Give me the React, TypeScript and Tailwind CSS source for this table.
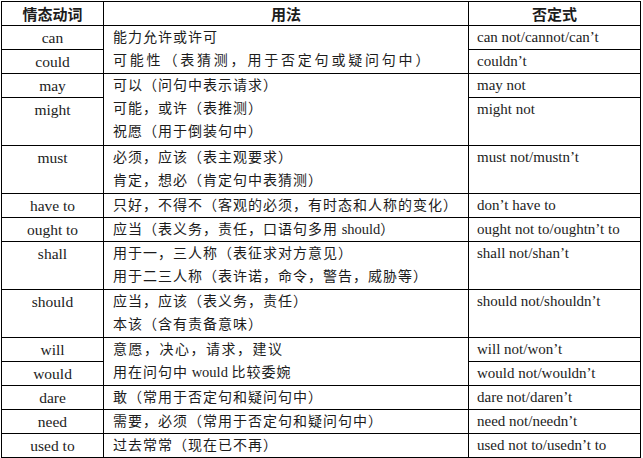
import type { ReactNode } from 'react'

const FONT = 'font-["Liberation_Serif","Noto_Sans_CJK_SC",serif]'

function Lines({ items }: { items: ReactNode[] }) {
  return (
    <div className="flex flex-col">
      {items.map((line, i) => (
        <span key={i} className="h-[23px] leading-[23px] whitespace-nowrap">
          {line}
        </span>
      ))}
    </div>
  )
}

// English words inside the Chinese usage text
function En({ children }: { children: ReactNode }) {
  return <span className="tracking-normal text-[14.5px]">{children}</span>
}

const cellLeft = 'border border-black align-top text-center text-[15.5px] leading-[23px] p-0'
const cellMid = 'border border-black align-top pl-[9px] pr-0 py-0 text-[14px] tracking-[1px]'
const cellRight = 'border border-black align-top pl-[8px] pr-0 py-0 text-[15px] leading-[23px] whitespace-nowrap'
const cellHead = "border border-black p-0 text-[15px] font-bold font-['Noto_Sans_CJK_SC',sans-serif] leading-[22px]"

export default function App() {
  return (
    <div className={`bg-white w-[643px] h-[458px] pl-[1px] pt-[1px] text-[#1c1c1c] ${FONT}`}>
      <table className="table-fixed border-collapse w-[639px]">
        <colgroup>
          <col className="w-[102px]" />
          <col className="w-[365px]" />
          <col className="w-[172px]" />
        </colgroup>
        <thead>
          <tr className="h-[24px]">
            <th className={cellHead}>情态动词</th>
            <th className={cellHead}>用法</th>
            <th className={cellHead}>否定式</th>
          </tr>
        </thead>
        <tbody>
          <tr className="h-[24px]">
            <td className={cellLeft}>can</td>
            <td rowSpan={2} className={cellMid}>
              <Lines
                items={[
                  '能力允许或许可',
                  <span className="tracking-[2.8px]">可能性（表猜测，用于否定句或疑问句中）</span>,
                ]}
              />
            </td>
            <td className={cellRight}>can not/cannot/can’t</td>
          </tr>
          <tr className="h-[24px]">
            <td className={cellLeft}>could</td>
            <td className={cellRight}>couldn’t</td>
          </tr>
          <tr className="h-[24px]">
            <td className={cellLeft}>may</td>
            <td rowSpan={2} className={cellMid}>
              <Lines items={['可以（问句中表示请求）', '可能，或许（表推测）', '祝愿（用于倒装句中）']} />
            </td>
            <td className={cellRight}>may not</td>
          </tr>
          <tr className="h-[48px]">
            <td className={cellLeft}>might</td>
            <td className={cellRight}>might not</td>
          </tr>
          <tr className="h-[48px]">
            <td className={cellLeft}>must</td>
            <td className={cellMid}>
              <Lines items={['必须，应该（表主观要求）', '肯定，想必（肯定句中表猜测）']} />
            </td>
            <td className={cellRight}>must not/mustn’t</td>
          </tr>
          <tr className="h-[24px]">
            <td className={cellLeft}>have to</td>
            <td className={`${cellMid} tracking-[0.5px]`}>
              <Lines items={['只好，不得不（客观的必须，有时态和人称的变化）']} />
            </td>
            <td className={cellRight}>don’t have to</td>
          </tr>
          <tr className="h-[24px]">
            <td className={cellLeft}>ought to</td>
            <td className={cellMid}>
              <Lines
                items={[
                  <>
                    应当（表义务，责任，口语句多用<En> should</En>）
                  </>,
                ]}
              />
            </td>
            <td className={cellRight}>ought not to/oughtn’t to</td>
          </tr>
          <tr className="h-[48px]">
            <td className={cellLeft}>shall</td>
            <td className={cellMid}>
              <Lines items={['用于一，三人称（表征求对方意见）', '用于二三人称（表许诺，命令，警告，威胁等）']} />
            </td>
            <td className={cellRight}>shall not/shan’t</td>
          </tr>
          <tr className="h-[48px]">
            <td className={cellLeft}>should</td>
            <td className={cellMid}>
              <Lines items={['应当，应该（表义务，责任）', '本该（含有责备意味）']} />
            </td>
            <td className={cellRight}>should not/shouldn’t</td>
          </tr>
          <tr className="h-[24px]">
            <td className={cellLeft}>will</td>
            <td rowSpan={2} className={cellMid}>
              <Lines
                items={[
                  <span className="tracking-[1.5px]">意愿，决心，请求，建议</span>,
                  <>
                    用在问句中<En> would </En>比较委婉
                  </>,
                ]}
              />
            </td>
            <td className={cellRight}>will not/won’t</td>
          </tr>
          <tr className="h-[24px]">
            <td className={cellLeft}>would</td>
            <td className={cellRight}>would not/wouldn’t</td>
          </tr>
          <tr className="h-[24px]">
            <td className={cellLeft}>dare</td>
            <td className={cellMid}>
              <Lines items={['敢（常用于否定句和疑问句中）']} />
            </td>
            <td className={cellRight}>dare not/daren’t</td>
          </tr>
          <tr className="h-[24px]">
            <td className={cellLeft}>need</td>
            <td className={cellMid}>
              <Lines items={['需要，必须（常用于否定句和疑问句中）']} />
            </td>
            <td className={cellRight}>need not/needn’t</td>
          </tr>
          <tr className="h-[24px]">
            <td className={cellLeft}>used to</td>
            <td className={cellMid}>
              <Lines items={['过去常常（现在已不再）']} />
            </td>
            <td className={cellRight}>used not to/usedn’t to</td>
          </tr>
        </tbody>
      </table>
    </div>
  )
}
